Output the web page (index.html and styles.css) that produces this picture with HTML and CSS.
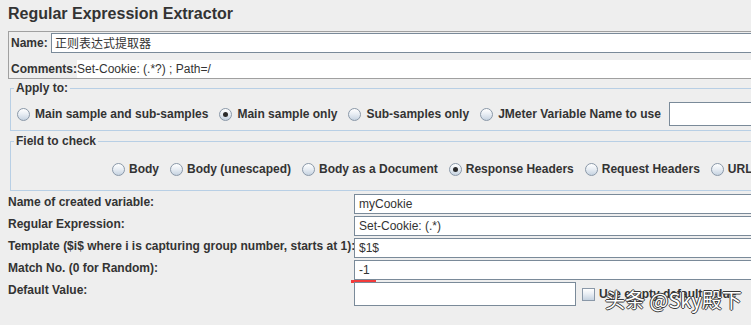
FILE: index.html
```html
<!DOCTYPE html>
<html lang="zh">
<head>
<meta charset="utf-8">
<title>Regular Expression Extractor</title>
<link rel="stylesheet" href="styles.css">
</head>
<body>
<div class="page">
  <h1 class="title">Regular Expression Extractor</h1>

  <div class="namebox">
    <div class="nrow nrow-name">
      <span class="nlabel name-label">Name:</span>
      <div class="tfield name-field">正则表达式提取器</div>
    </div>
    <div class="nrow nrow-comments">
      <span class="nlabel">Comments:</span>
      <div class="comments-field">Set-Cookie: (.*?) ; Path=/</div>
    </div>
  </div>

  <fieldset class="group apply">
    <legend>Apply to:</legend>
    <div class="opts opts-apply">
      <span class="opt"><span class="radio"></span>Main sample and sub-samples</span>
      <span class="opt"><span class="radio on"></span>Main sample only</span>
      <span class="opt"><span class="radio"></span>Sub-samples only</span>
      <span class="opt"><span class="radio"></span>JMeter Variable Name to use</span>
      <div class="tfield var-field"></div>
    </div>
  </fieldset>

  <fieldset class="group field">
    <legend>Field to check</legend>
    <div class="opts opts-field">
      <span class="opt"><span class="radio"></span>Body</span>
      <span class="opt"><span class="radio"></span>Body (unescaped)</span>
      <span class="opt"><span class="radio"></span>Body as a Document</span>
      <span class="opt"><span class="radio on"></span>Response Headers</span>
      <span class="opt"><span class="radio"></span>Request Headers</span>
      <span class="opt"><span class="radio"></span>URL</span>
    </div>
  </fieldset>

  <div class="form">
    <span class="flabel">Name of created variable:</span>
    <div class="tfield">myCookie</div>
    <span class="flabel">Regular Expression:</span>
    <div class="tfield">Set-Cookie: (.*)</div>
    <span class="flabel">Template ($i$ where i is capturing group number, starts at 1):</span>
    <div class="tfield">$1$</div>
    <span class="flabel">Match No. (0 for Random):</span>
    <div class="tfield match-field">-1<span class="redmark"></span></div>
    <span class="flabel">Default Value:</span>
    <div class="default-row">
      <div class="tfield default-field"></div>
      <span class="opt check-opt"><span class="checkbox"></span>Use empty default value</span>
    </div>
  </div>
</div>
<div class="watermark">头条 @Sky殿下</div>
</body>
</html>
```
FILE: styles.css
```css
html, body {
  margin: 0;
  padding: 0;
}
body {
  width: 751px;
  height: 325px;
  overflow: hidden;
  position: relative;
  background: #eeeeee;
  color: #333333;
  font-family: "Liberation Sans", Arial, sans-serif;
  font-size: 12px;
}
.page {
  width: 820px;
  padding-left: 8px;
}
.title {
  margin: 0;
  padding-top: 4px;
  font-size: 16px;
  line-height: 20px;
  font-weight: bold;
  color: #333;
}

/* name / comments panel */
.namebox {
  margin-top: 7px;
  border: 1px solid #a0a0a0;
}
.nrow {
  display: flex;
}
.nlabel {
  font-weight: bold;
  padding-left: 1px;
}
.nrow-name {
  height: 22px;
  align-items: center;
}
.name-label {
  width: 42px;
  padding-left: 2px;
  box-sizing: border-box;
}
.name-field {
  flex: 1;
  height: 22px;
  line-height: 20px;
  font-family: "Noto Sans CJK SC", "Liberation Sans", sans-serif;
  font-size: 12px;
  padding-left: 2px;
}
.nrow-comments {
  height: 24px;
  align-items: flex-end;
}
.nrow-comments .nlabel {
  line-height: 18px;
  padding-left: 2px;
}
.comments-field {
  flex: 1;
  height: 18px;
  line-height: 18px;
  background: #ffffff;
}

/* text field */
.tfield {
  box-sizing: border-box;
  background: #ffffff;
  border: 1px solid #7a8a99;
  height: 20px;
  line-height: 18px;
  padding-left: 3px;
  white-space: nowrap;
  position: relative;
}

/* fieldsets */
.group {
  margin: 0 0 0 2px;
  border: 1px solid #b8cfe5;
  padding: 0 0 0 6px;
  min-width: 0;
}
.group legend {
  font-weight: bold;
  line-height: 14px;
  padding: 0 2px;
  margin-left: -3px;
}
.apply {
  margin-top: 2px;
  padding-top: 7px;
  padding-bottom: 4px;
}
.field {
  margin-top: 3px;
  padding-top: 11px;
  padding-bottom: 11px;
}
.opts {
  display: flex;
  align-items: center;
  height: 24px;
  white-space: nowrap;
}
.opts-apply {
  gap: 11px;
}
.opts-apply .radio {
  margin-right: 5px;
}
.opts-field {
  height: 20px;
  gap: 11px;
  padding-left: 95px;
}
.opt {
  display: inline-flex;
  align-items: center;
  font-weight: bold;
  line-height: 16px;
  flex: none;
}
.radio {
  box-sizing: border-box;
  width: 13px;
  height: 13px;
  margin-right: 4px;
  border-radius: 50%;
  border: 1px solid #8a98a8;
  background: linear-gradient(180deg, #ffffff 0%, #e9eef4 45%, #c6d3e1 100%);
  position: relative;
  flex: none;
}
.radio.on::after {
  content: "";
  position: absolute;
  left: 3px;
  top: 3px;
  width: 5px;
  height: 5px;
  border-radius: 50%;
  background: #2b2b2b;
}
.var-field {
  width: 120px;
  height: 24px;
  margin-left: -3px;
  flex: none;
}

/* form rows */
.form {
  margin-top: 3px;
  display: grid;
  grid-template-columns: 346px 1fr;
  grid-auto-rows: 20px;
  row-gap: 2px;
}
.form > .flabel {
  font-weight: bold;
  line-height: 16px;
  white-space: nowrap;
}
.form > .tfield {
  padding-left: 4px;
}
.default-row {
  display: flex;
  align-items: center;
  height: 24px;
}
.default-field {
  width: 222px;
  height: 24px;
  flex: none;
}
.check-opt {
  margin-left: 6px;
}
.checkbox {
  box-sizing: border-box;
  width: 13px;
  height: 13px;
  margin-right: 4px;
  border: 1px solid #8a98a8;
  background: linear-gradient(180deg, #ffffff 0%, #e9eef4 45%, #c6d3e1 100%);
  flex: none;
}
.redmark {
  position: absolute;
  left: -4px;
  top: 19px;
  width: 25px;
  height: 3px;
  background: #f23b3b;
}
.watermark {
  position: absolute;
  left: 605px;
  top: 287px;
  font-family: "Noto Sans CJK SC", "Liberation Sans", sans-serif;
  font-size: 20px;
  line-height: 26px;
  color: #ffffff;
  text-shadow: 1px 0 0 #3a3a3a, -1px 0 0 #3a3a3a, 0 1px 0 #3a3a3a, 0 -1px 0 #3a3a3a;
  white-space: nowrap;
}
```
